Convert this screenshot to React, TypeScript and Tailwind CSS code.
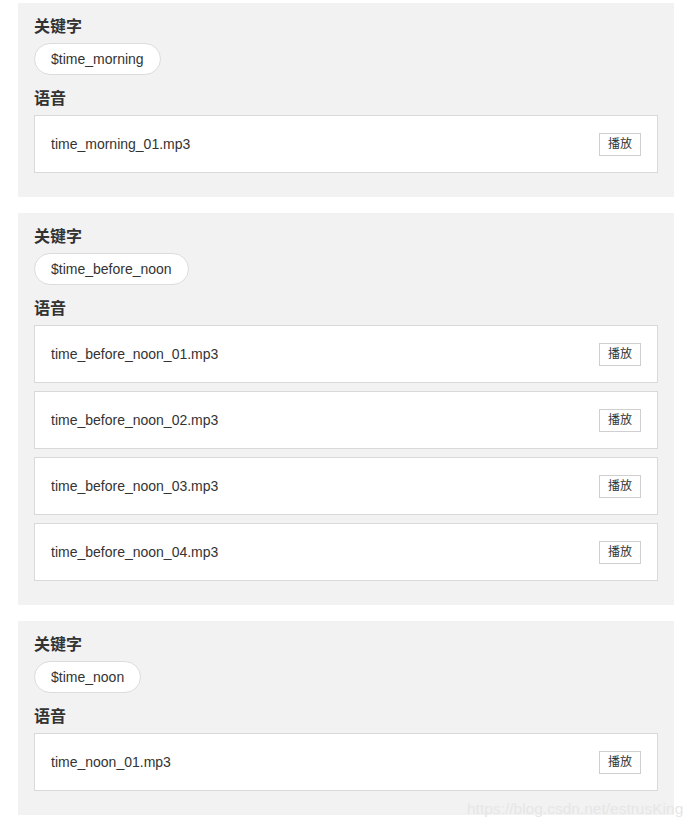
const groups = [
  { keyword: "$time_morning", files: ["time_morning_01.mp3"] },
  {
    keyword: "$time_before_noon",
    files: [
      "time_before_noon_01.mp3",
      "time_before_noon_02.mp3",
      "time_before_noon_03.mp3",
      "time_before_noon_04.mp3",
    ],
  },
  { keyword: "$time_noon", files: ["time_noon_01.mp3"] },
];

export default function App() {
  return (
    <div
      className="relative w-[695px] h-[825px] bg-white pt-[3px] pl-[18px] text-[#333] overflow-hidden"
      style={{ fontFamily: '"Liberation Sans", "Noto Sans CJK SC", sans-serif' }}
    >
      <div className="flex flex-col gap-4 w-[656px]">
        {groups.map((g) => (
          <div key={g.keyword} className="bg-[#f2f2f2] px-4 pt-3 pb-6">
            <div className="h-6 leading-6 text-[16px] font-bold text-[#333]">关键字</div>
            <div className="mt-1 flex">
              <span className="h-8 leading-[30px] px-4 rounded-full border border-[#dcdcdc] bg-white text-[14px]">
                {g.keyword}
              </span>
            </div>
            <div className="mt-3 h-6 leading-6 text-[16px] font-bold text-[#333]">语音</div>
            <div className="mt-1 flex flex-col gap-2">
              {g.files.map((f) => (
                <div
                  key={f}
                  className="h-[58px] border border-[#d9d9d9] bg-white px-4 flex items-center justify-between"
                >
                  <span className="text-[14px] leading-[14px]">{f}</span>
                  <button className="w-[42px] h-[23px] border border-[#cfcfcf] bg-white text-[12px] text-[#333] leading-none">
                    播放
                  </button>
                </div>
              ))}
            </div>
          </div>
        ))}
      </div>
      <div className="absolute left-[467px] top-[797px] whitespace-nowrap text-[15.5px] text-[#e6e6e6]">
        https://blog.csdn.net/estrusKing
      </div>
    </div>
  );
}
